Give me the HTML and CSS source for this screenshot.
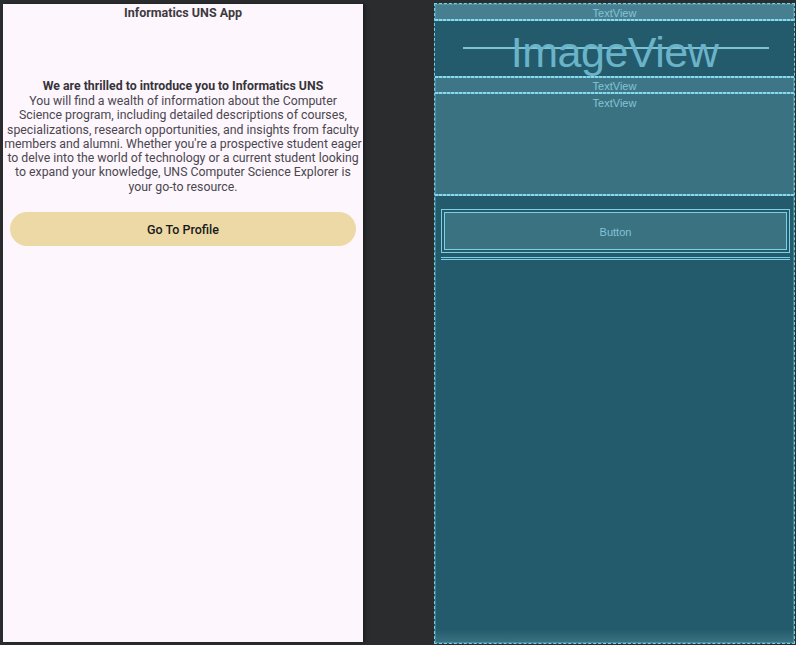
FILE: index.html
```html
<!DOCTYPE html>
<html>
<head>
<meta charset="utf-8">
<link rel="stylesheet" href="styles.css">
</head>
<body>
<div class="stage">
  <div class="phone">
    <div class="app-title">Informatics UNS App</div>
    <div class="image-space"></div>
    <div class="heading">We are thrilled to introduce you to Informatics UNS</div>
    <p class="body-text">You will find a wealth of information about the Computer<br>Science program, including detailed descriptions of courses,<br>specializations, research opportunities, and insights from faculty<br>members and alumni. Whether you're a prospective student eager<br>to delve into the world of technology or a current student looking<br>to expand your knowledge, UNS Computer Science Explorer is<br>your go-to resource.</p>
    <div class="btn-wrap"><button class="btn">Go To Profile</button></div>
  </div>
  <div class="blueprint">
    <div class="bp-box bp-title">TextView</div>
    <div class="bp-box bp-image">
      <span class="bp-line"></span>
      <span class="bp-image-label">ImageView</span>
    </div>
    <div class="bp-box bp-heading">TextView</div>
    <div class="bp-box bp-body">TextView</div>
    <div class="bp-rest">
      <div class="bp-button-outer"><div class="bp-button">Button</div></div>
      <div class="bp-divider"></div>
      <div class="bp-fill"></div>
      <div class="bp-bottom"></div>
    </div>
  </div>
</div>
</body>
</html>
```

FILE: styles.css
```css
html, body {
  margin: 0;
  padding: 0;
  background: #2b2c2e;
  width: 796px;
  height: 645px;
  overflow: hidden;
  font-family: Roboto, "Liberation Sans", sans-serif;
}
.stage {
  display: flex;
  align-items: flex-start;
  height: 645px;
}
.phone {
  margin-left: 3px;
  margin-top: 4px;
  width: 360px;
  height: 638px;
  background: #fdf6fd;
  box-shadow: 2px 0 3px rgba(0,0,0,0.35);
  display: flex;
  flex-direction: column;
}
.app-title {
  text-align: center;
  font-size: 12.5px;
  font-weight: 700;
  color: #3d3b40;
  line-height: 16px;
  margin-top: 1px;
}
.image-space {
  height: 58px;
}
.heading {
  text-align: center;
  font-size: 12.3px;
  font-weight: 700;
  color: #36343a;
  line-height: 15px;
}
.body-text {
  margin: 0;
  text-align: center;
  font-size: 12.3px;
  color: #4a474f;
  line-height: 14.3px;
  white-space: nowrap;
}
.btn-wrap {
  padding: 18px 7px 0 7px;
}
.btn {
  width: 100%;
  height: 34px;
  border: none;
  border-radius: 17px;
  background: #ecd9a6;
  color: #1a1a1a;
  font-family: Roboto, "Liberation Sans", sans-serif;
  font-size: 12.5px;
  font-weight: 500;
  padding: 0;
}
.blueprint {
  margin-left: 71px;
  margin-top: 3px;
  width: 361px;
  height: 641px;
  background: #235b6c;
  box-sizing: border-box;
  border: 1px dashed #78cfe4;
  outline: 1px solid rgba(108,198,220,0.35);
  outline-offset: -2px;
  display: flex;
  flex-direction: column;
  color: #83c4d6;
  font-family: "Liberation Sans", Arial, sans-serif;
}
.bp-box {
  box-sizing: border-box;
  text-align: center;
  font-size: 11px;
  background-repeat: no-repeat;
  background-position: bottom left;
  background-size: 100% 2px;
  background-image: repeating-linear-gradient(90deg, #8ad8ec 0 3px, #55a9c0 3px 4px);
  padding-bottom: 2px;
}
.bp-title {
  height: 17px;
  background-color: #477f90;
  line-height: 18px;
}
.bp-image {
  height: 57px;
  background-color: #235b6c;
  position: relative;
  display: flex;
  align-items: center;
  justify-content: center;
}
.bp-line {
  position: absolute;
  left: 28px;
  right: 25px;
  top: 26px;
  height: 2px;
  background: #7cc3d6;
}
.bp-image-label {
  position: relative;
  top: 3px;
  font-size: 43px;
  line-height: 50px;
  color: #6ab3c8;
  letter-spacing: -0.5px;
}
.bp-heading {
  height: 16px;
  background-color: #3e7687;
  line-height: 17px;
}
.bp-body {
  height: 102px;
  background-color: #3a7282;
  line-height: 19px;
}
.bp-rest {
  flex: 1;
  display: flex;
  flex-direction: column;
  padding: 12px 4px 0 6px;
}
.bp-button-outer {
  height: 44px;
  box-sizing: border-box;
  border: 1px solid #7ccfe4;
  padding: 2px;
  margin-top: 1px;
}
.bp-button {
  height: 100%;
  box-sizing: border-box;
  border: 1px solid #7ccfe4;
  background: #3a7282;
  display: flex;
  align-items: center;
  justify-content: center;
  font-size: 11px;
  color: #83c4d6;
  padding-top: 1px;
}
.bp-divider {
  margin-top: 4px;
  height: 3px;
  border-top: 1px solid #7ccfe4;
  border-bottom: 1px solid #7ccfe4;
  box-sizing: border-box;
}
.bp-fill {
  flex: 1;
}
.bp-bottom {
  height: 14px;
  margin: 0 -4px 0 -6px;
  background: linear-gradient(#235b6c, #3a7282);
}
```
